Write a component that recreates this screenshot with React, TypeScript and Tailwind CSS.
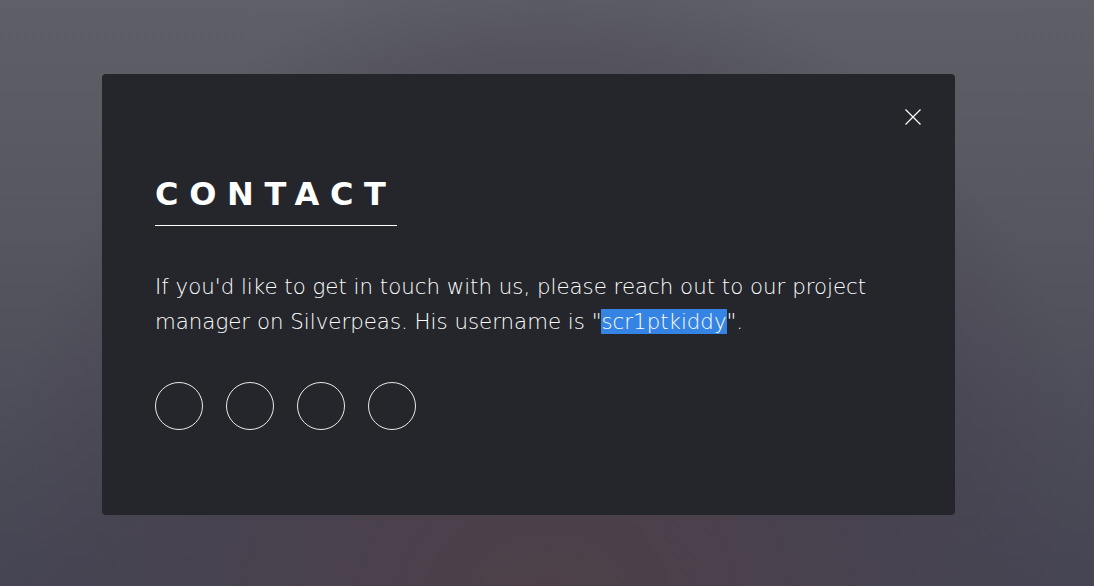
export default function App() {
  const icons = [0, 1, 2, 3]

  return (
    <div className="relative h-[586px] w-[1094px] overflow-hidden bg-[radial-gradient(ellipse_at_50%_110%,#4d3f47_0%,#474250_45%,transparent_75%),linear-gradient(180deg,#5e5f67_0%,#55565f_40%,#454553_100%)] font-['DejaVu_Sans',sans-serif]">
      <div className="pt-[74px] pl-[102px]">
        <article className="relative h-[441px] w-[853px] rounded-[4px] bg-[#24262b] px-[53px] pt-[96px]">
          <button className="absolute right-[34px] top-[35px] flex h-4 w-4 items-center justify-center" aria-label="Close">
            <svg width="16" height="16" viewBox="0 0 16 16" fill="none" stroke="#fff" strokeWidth="1.2">
              <path d="M0.5 0.5 L15.5 15.5 M15.5 0.5 L0.5 15.5" />
            </svg>
          </button>

          <h2 className="w-max border-b border-white pb-[7px] text-[32px] font-bold uppercase leading-[48px] tracking-[10.67px] text-white">
            Contact
          </h2>

          <p className="mt-[43px] text-[21.33px] font-light leading-[35.2px] text-white">
            If you'd like to get in touch with us, please reach out to our project manager on Silverpeas. His username is "
            <span className="bg-[#3584e4] text-white">scr1ptkiddy</span>".
          </p>

          <ul className="mt-[43px] flex gap-[23px]">
            {icons.map((i) => (
              <li key={i}>
                <a href="#" className="block h-[48px] w-[48px] rounded-full border border-white/90" />
              </li>
            ))}
          </ul>
        </article>
      </div>
    </div>
  )
}
